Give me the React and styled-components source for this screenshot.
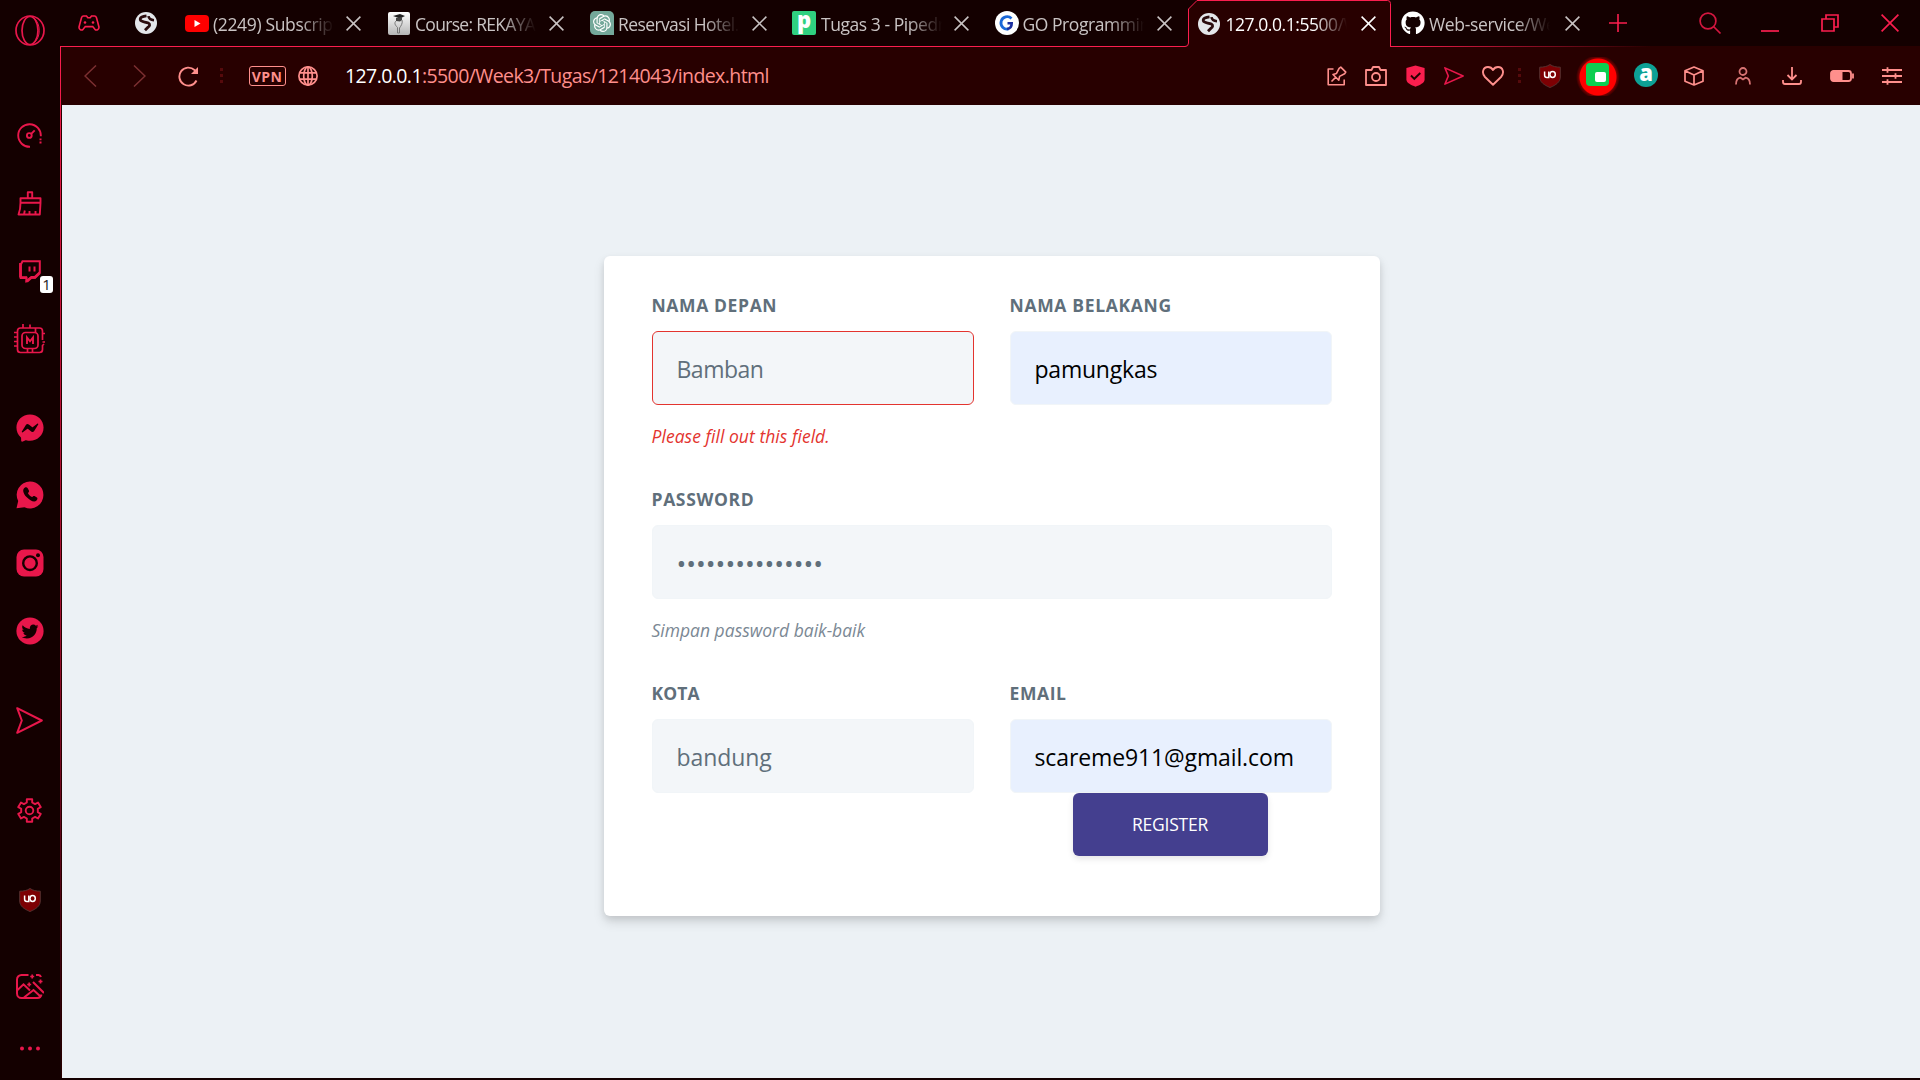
import React from "react";
import styled, { createGlobalStyle, css } from "styled-components";
import { FaGithub, FaTwitter, FaFacebookMessenger } from "react-icons/fa";
import { SiOpenai } from "react-icons/si";

const ACCENT = "#fa1e4e";
const SIDE = "#e8174b";
const SALMON = "#ff8f8c";

const GlobalStyle = createGlobalStyle`
  * { box-sizing: border-box; }
  body { margin: 0; background: #000; overflow: hidden; }
  body, input, button { font-family: "Open Sans", "Noto Sans", sans-serif; }
  svg { flex: none; }
`;

const Window = styled.div`
  display: flex;
  width: 1920px;
  height: 1080px;
  background: #140000;
`;

const Sidebar = styled.nav`
  display: flex;
  flex-direction: column;
  width: 60px;
  height: 1078px;
  padding-right: 1px;
  color: ${SIDE};
`;

const SideGroup = styled.div`
  display: flex;
  flex-direction: column;
  margin-top: ${(p) => p.$top}px;
`;

const SideItem = styled.div`
  position: relative;
  display: flex;
  align-items: center;
  justify-content: center;
  height: ${(p) => p.$h || 67.7}px;
  svg { display: block; }
`;

const Badge = styled.span`
  position: absolute;
  left: 40px;
  top: 39px;
  width: 13px;
  height: 17px;
  border-radius: 3px;
  background: #fff;
  color: #222;
  font-size: 15px;
  line-height: 16px;
  text-align: center;
`;

const Main = styled.div`
  display: flex;
  flex-direction: column;
  flex: 1;
  min-width: 0;
`;

const TabBar = styled.header`
  display: flex;
  height: 46px;
  align-items: stretch;
`;

const PinnedTab = styled.div`
  display: flex;
  align-items: center;
  justify-content: center;
  width: ${(p) => p.$w}px;
  padding-right: ${(p) => p.$shift || 0}px;
  color: ${ACCENT};
`;

const Tab = styled.div`
  position: relative;
  display: flex;
  flex: none;
  align-items: center;
  width: ${(p) => p.$w || 202.5}px;
  padding-left: ${(p) => p.$pad || 9}px;
  padding-right: ${(p) => p.$end || 17.5}px;
  color: ${(p) => (p.$active ? "#fff" : "#c9c3c3")};
  ${(p) => p.$active && css`height: 47px; z-index: 1;`}
`;

const TabOutline = styled.svg`
  position: absolute;
  left: -4px;
  top: 0;
`;

const TabIcon = styled.span`
  position: relative;
  display: flex;
  align-items: center;
  justify-content: center;
  flex: none;
  width: 24px;
  height: 24px;
`;

const TabTitle = styled.span`
  position: relative;
  flex: none;
  margin: 1px auto 0 ${(p) => p.$gap || 4}px;
  width: 121px;
  overflow: hidden;
  white-space: nowrap;
  font-size: 17.5px;
  line-height: 26px;
  letter-spacing: ${(p) => p.$ls || -0.45}px;
  -webkit-mask-image: linear-gradient(to right, #000 calc(100% - 34px), transparent);
  mask-image: linear-gradient(to right, #000 calc(100% - 34px), transparent);
`;

const CloseSlot = styled.span`
  position: relative;
  display: flex;
`;

const WindowTools = styled.div`
  display: flex;
  flex: 1;
  align-items: center;
  color: ${ACCENT};
`;

const ToolSlot = styled.div`
  display: flex;
  flex: none;
  align-items: center;
  justify-content: center;
  width: ${(p) => p.$w}px;
  height: 100%;
  margin-left: ${(p) => p.$gap || 0}px;
`;

const BelowTabs = styled.div`
  display: flex;
  flex: 1;
`;

const EdgeLine = styled.div`
  width: 1px;
  height: 1032px;
  background: linear-gradient(to bottom, ${ACCENT} 0, #d01540 20%, #a01030 55%, #2a0008 95%, #140000 100%);
`;

const Content = styled.div`
  display: flex;
  flex-direction: column;
  flex: 1;
  height: 1032px;
  background: #280000;
`;

const TopLine = styled.div`
  height: 1px;
  background: linear-gradient(to right, ${ACCENT} 0 1330px, #280000 1590px);
`;

const Toolbar = styled.div`
  display: flex;
  align-items: center;
  height: 58px;
  color: ${SALMON};
`;

const VpnTag = styled.span`
  display: flex;
  align-items: center;
  justify-content: center;
  width: 37px;
  height: 20px;
  border: 1.5px solid ${SALMON};
  border-radius: 3px;
  font: 700 14px/17px "Open Sans", sans-serif;
  letter-spacing: 0.4px;
`;

const Url = styled.div`
  flex: 1;
  padding-bottom: 1px;
  font-size: 19.5px;
  line-height: 28px;
  letter-spacing: -0.59px;
  white-space: nowrap;
  b { font-weight: 400; color: #fff; }
`;

const GlowDisc = styled.span`
  display: flex;
  align-items: center;
  justify-content: center;
  width: 48px;
  height: 39px;
  overflow: hidden;
  background: radial-gradient(circle at 24px 20px, #ff0000 0 18px, rgba(255, 0, 0, 0.35) 19px, rgba(255, 0, 0, 0) 22px);
  padding: 0 1px 3px 0;
`;

const GreenTile = styled.span`
  display: flex;
  align-items: flex-end;
  justify-content: flex-end;
  width: 23px;
  height: 23px;
  padding: 0 3px 4px 0;
  border-radius: 4px;
  background: #0dce50;
  &::after { content: ""; width: 11px; height: 10px; border-radius: 2px; background: #fff; }
`;

const TealDisc = styled.span`
  width: 24px;
  height: 24px;
  margin-bottom: 3px;
  border-radius: 50%;
  background: #0da195;
  color: #fff;
  font-size: 22px;
  font-weight: 800;
  line-height: 19px;
  text-align: center;
`;

const Page = styled.main`
  display: flex;
  flex: 1;
  justify-content: center;
  align-items: flex-start;
  margin-left: 1px;
  padding-top: 151px;
  background: #ecf1f5;
`;

const Card = styled.form`
  display: flex;
  flex-direction: column;
  width: 776px;
  height: 660px;
  padding: 36px 48px 0;
  border-radius: 6px;
  background: #fff;
  box-shadow: 0 6px 12px rgba(0, 0, 0, 0.12), 0 3px 6px rgba(0, 0, 0, 0.08);
  margin-left: 2px;
`;

const FormRow = styled.div`
  display: flex;
  gap: 36px;
  height: 194px;
`;

const Field = styled.div`
  display: flex;
  flex: 1;
  flex-direction: column;
  min-width: 0;
`;

const Label = styled.label`
  height: 39px;
  margin-left: -0.5px;
  color: #606f7b;
  font-size: 17.5px;
  font-weight: 700;
  line-height: 27px;
  letter-spacing: ${(p) => p.$ls || 0.3}px;
  text-transform: uppercase;
  white-space: nowrap;
`;

const Input = styled.input`
  width: 100%;
  height: 74px;
  padding: 2px 23.5px 0;
  border: 1px solid ${(p) => (p.$error ? "#e3342f" : "#f1f5f8")};
  border-radius: 6px;
  outline: none;
  background: ${(p) => (p.$filled ? "#e8f0fe" : "#f3f6f9")};
  color: #000;
  font-size: ${(p) => p.$size || 23}px;
  letter-spacing: ${(p) => p.$ls || 0}px;
  &::placeholder { color: #606f7b; opacity: 1; }
`;

const Hint = styled.p`
  margin: 18px 0 0 -0.5px;
  color: ${(p) => (p.$error ? "#e3342f" : "#7b8894")};
  font-size: 17.5px;
  font-style: italic;
  line-height: 27px;
  letter-spacing: ${(p) => p.$ls || 0}px;
  white-space: nowrap;
`;

const RegisterButton = styled.button`
  align-self: center;
  width: 195px;
  height: 63px;
  margin-right: 2px;
  padding-bottom: 3px;
  flex: none;
  border: 0;
  border-radius: 6px;
  background: #443f8f;
  color: #fff;
  font-size: 17.5px;
  letter-spacing: -0.25px;
  box-shadow: 0 3px 6px rgba(0, 0, 0, 0.1);
`;

const Svg = ({ w = 24, h = w, box, sw = 1.6, children, ...rest }) => (
  <svg width={w} height={h} viewBox={box || `0 0 ${w} ${h}`} fill="none" stroke="currentColor" strokeWidth={sw} {...rest}>
    {children}
  </svg>
);

const Cross = ({ size = 15, sw = 1.5 }) => (
  <Svg w={size} sw={sw}><path d={`M.6.6 ${size - 0.6} ${size - 0.6}M${size - 0.6}.6.6 ${size - 0.6}`} /></Svg>
);

const GlobeFavicon = () => (
  <Svg w={22} stroke="#2b0c0e">
    <circle cx="11" cy="11" r="11" fill="#e4e6ea" stroke="none" />
    <path d="M11.500 3.800C8 4.200 4.800 5.200 5.300 7.800c.5 2.400 5.200 1.900 8 3.200 2 1 1.600 3.200-.3 4.200l-3 3" strokeWidth="2.800" />
    <path d="M13.500 4.200c.3 2.400 2 3.800 5.500 4" strokeWidth="2.600" />
  </Svg>
);

const Gamepad = () => (
  <Svg w={22} h={16} sw={1.6}>
    <path d="M5.500 1h3l1.300 1.700h2.400L13.500 1h3c1 0 1.700.8 2 1.700l2.400 9c.5 2.500-2.200 4.300-4 2.600l-2.200-2.700H7.300l-2.200 2.700c-1.800 1.700-4.500-.1-4-2.600l2.400-9C3.800 1.800 4.500 1 5.500 1Z" />
    <circle cx="7" cy="7.500" r="1.300" fill="currentColor" stroke="none" />
    <circle cx="15" cy="7.500" r="1.300" fill="currentColor" stroke="none" />
  </Svg>
);

const YoutubeIcon = () => (
  <Svg w={24} h={17} stroke="none">
    <rect width="24" height="17" rx="4" fill="#f00" />
    <path d="m9.500 5 6 3.500-6 3.500z" fill="#fff" />
  </Svg>
);

const CourseIcon = () => (
  <Svg w={22} h={23} stroke="none">
    <defs><linearGradient id="course" x2="0" y2="1"><stop stopColor="#fff" /><stop offset="1" stopColor="#b5b5b5" /></linearGradient></defs>
    <rect width="22" height="23" rx="2" fill="url(#course)" />
    <path d="m5 4 7-2 5 2-5 2.500z" fill="#222" />
    <path d="M8 6v3l4 .5 2-1.500V5z" fill="#444" />
    <path d="M8 9c-2 2-1 4 1.500 6.500V21h2v-5C13 14 15 11 14 8" fill="none" stroke="#777" strokeWidth="1" />
  </Svg>
);

const ChatIcon = () => (
  <Svg w={24} stroke="none">
    <path d="M5 0h14a5 5 0 0 1 5 5v19H5a5 5 0 0 1-5-5V5a5 5 0 0 1 5-5Z" fill="#74a89a" />
    <SiOpenai x="3" y="3" width="18" height="18" size={18} color="#fff" />
  </Svg>
);

const PipeTile = styled.span`
  width: 24px;
  height: 24px;
  border-radius: 2px;
  background: #2fd180;
  color: #fff;
  font-size: 22px;
  font-weight: 800;
  line-height: 17px;
  text-align: center;
`;

const GIcon = () => (
  <Svg w={24} stroke="none">
    <circle cx="12" cy="12" r="12" fill="#fff" />
    <path d="M16.500 7.500A6.200 6.200 0 1 0 13.500 18" fill="none" stroke="#1b68d8" strokeWidth="2.800" />
    <path d="M12.500 12.200h4.200c0 3.300-1.600 5.400-4.600 5.800" fill="none" stroke="#1b2fa0" strokeWidth="2.600" />
  </Svg>
);

const UShield = () => (
  <Svg w={22} h={24} stroke="none">
    <path d="M11 .5c3 2 6 2.700 10.300 2.700V13c0 5-4.300 8-10.300 10.500C5 21 .7 18 .7 13V3.200C5 3.200 8 2.500 11 .5Z" fill="#7d0003" stroke="#54302f" strokeWidth="1" />
    <path d="M5.600 7.500v3.800a2.200 2.200 0 0 0 2.200 2.200h2V7.500" fill="none" stroke="#fff" strokeWidth="1.500" />
    <ellipse cx="13.600" cy="10.500" rx="2.700" ry="2.900" fill="none" stroke="#fff" strokeWidth="1.500" />
  </Svg>
);

const SendIcon = ({ w, h, sw, color }) => (
  <Svg w={w} h={h} box="0 0 27 27" sw={sw} color={color} preserveAspectRatio="none" strokeLinejoin="round">
    <path d="M1.200 1.200 25.800 13.500 1.200 25.800 5.800 13.500z" />
  </Svg>
);

const OperaIcon = () => (
  <Svg w={30} h={31} sw={1.700}>
    <ellipse cx="15" cy="15.500" rx="14" ry="14.500" />
    <ellipse cx="15" cy="15.500" rx="8" ry="14" />
    <path d="M19 3c7 6 7 19 0 25" strokeWidth="1" />
  </Svg>
);

const GaugeIcon = () => (
  <Svg w={25} h={25} sw={1.900}>
    <path d="M13 23.800a11.300 11.300 0 1 1 10.800-10.600" />
    <circle cx="12.300" cy="12.500" r="2.400" />
    <path d="m14.200 10.800 3.500-3.500" />
    <path d="M22.500 16.300h2M22.500 19.500h2" strokeWidth="1.800" />
  </Svg>
);

const BroomIcon = () => (
  <Svg w={25} h={25} sw={1.900} strokeLinejoin="round">
    <path d="M10.800 7V1.200h4.400V7M3.500 11.800V7.300h20v4.500zM3.500 11.800c0 4-.5 8.200-2 11.700h21.300l.7-11.700M7 23.500l.8-4M12.500 23.500v-3.500M18.500 23.500v-3.500" />
  </Svg>
);

const TwitchIcon = () => (
  <Svg w={22} h={23} sw={2}>
    <path d="M3.500 1.200h17.300v11.500l-5 5h-4L7.500 21v-3.300H1.600V5z" />
    <path d="M1.500 3v14.500M1 17.700h7M6.500 20.800h2l4-3.500h3.500l4.800-4.500" strokeWidth="2.800" />
    <path d="M10.500 6.500v5M15.500 6.500v5" />
  </Svg>
);

const ChipIcon = () => (
  <Svg w={32} h={30} sw={1.700}>
    <path d="M28.500 16v-9a3 3 0 0 0-3-3h-19a3 3 0 0 0-3 3v18.500a3 3 0 0 0 3 3h19a3 3 0 0 0 3-3v-4l1.500-1.500" />
    <rect x="8" y="8.500" width="16" height="16" rx="3.500" />
    <path d="M0 8.500h3.500M0 13h3.500M0 17.500h3.500M0 22h3.500M28.500 9.500H31M28.500 18H31M9 4V0M16 4V.5M21.500 8.500V4M13.500 28.500v-4M18.500 28.500v-4" />
    <path d="M13 20v-6.500l3 3.800 3-3.800V20" strokeWidth="1.900" />
  </Svg>
);

const WhatsappIcon = () => (
  <Svg w={28} h={28} stroke="none">
    <path d="M14 .5A13.300 13.300 0 0 1 27.400 14 13.300 13.300 0 0 1 8.500 26.200L.5 27.300 2.200 20A13.300 13.300 0 0 1 14 .5Z" fill="currentColor" />
    <path d="M9 6.500c-3 1.500-2 6 1.500 9.500 3.800 4 8 5.600 10 3.500 1.300-1.400 1.200-2.500 0-3.200l-2-1.200c-1-.6-1.600.2-2.400 1-1.300-.5-3.700-2.800-4.200-4.200.9-.7 1.500-1.300 1-2.400l-1.200-2.200c-.6-1-1.500-1.300-2.700-.8Z" fill="#140000" />
  </Svg>
);

const InstagramIcon = () => (
  <Svg w={28} h={28} stroke="none">
    <rect x=".5" y=".5" width="27" height="27" rx="7.500" fill="currentColor" />
    <circle cx="14" cy="14.200" r="6.800" fill="none" stroke="#140000" strokeWidth="2.400" />
    <circle cx="22" cy="6.200" r="2" fill="#140000" />
  </Svg>
);

const TwitterIcon = () => (
  <Svg w={28} h={28} stroke="none">
    <circle cx="14" cy="14" r="13.600" fill="currentColor" />
    <FaTwitter x="5.500" y="6" size={17} color="#140000" />
  </Svg>
);

const GearIcon = () => (
  <Svg w={25} h={25} sw={1.900} strokeLinejoin="round">
    <path d="M9.800 1.200h5.400v3.300l2.900 1.600 2.900-1.600 2.700 4.600-2.900 1.700v3.400l2.900 1.700-2.700 4.600-2.900-1.600-2.900 1.600v3.300H9.800v-3.300l-2.900-1.600L4 20.500l-2.700-4.600 2.900-1.700v-3.400L1.300 9.100 4 4.500l2.900 1.600 2.900-1.600z" />
    <circle cx="12.500" cy="12.500" r="3.800" />
  </Svg>
);

const PictureIcon = () => (
  <Svg w={28} h={25} sw={2}>
    <path d="M12.500 1H5.500A4.500 4.500 0 0 0 1 5.500v14A4.500 4.500 0 0 0 5.500 24H21a4.500 4.500 0 0 0 4.500-3.500M1 16.500 7.500 10.300 14 16.500M8 23.500l9.500-7.500 7 6.500M17 8l11 11" />
    <path d="M20 1h2.500a3 3 0 0 1 2.500 2" />
    <path d="M16.200.500v4M14.200 2.500h4M13.200 8.500v4M11.200 10.500h4M24.500 5.500v4M22.500 7.500h4" strokeWidth="1.700" />
  </Svg>
);

const DotsH = () => (
  <Svg w={20} h={5} stroke="none">
    <circle cx="2" cy="2.500" r="2" fill="currentColor" />
    <circle cx="10" cy="2.500" r="2" fill="currentColor" />
    <circle cx="18" cy="2.500" r="2" fill="currentColor" />
  </Svg>
);

const DotsV = () => (
  <Svg w={3} h={16} stroke="none"><path d="M0 0h3v3H0zM0 6h3v3H0zM0 12h3v3H0z" fill="#560a0c" /></Svg>
);

const Chevron = ({ right }) => (
  <Svg w={13} h={22} sw={1.500} color="#7c2f31"><path d={right ? "M1 .5 12 11 1 21.500" : "M12 .5 1 11 12 21.500"} /></Svg>
);

const ReloadIcon = () => (
  <Svg w={21} h={21} sw={1.900}><path d="M18.500 14.500A9 9 0 1 1 16.500 4l2 2" /><path d="M20 1v7h-7z" fill="currentColor" stroke="none" /></Svg>
);

const GlobeIcon = () => (
  <Svg w={20} h={20} sw={1.700}><circle cx="10" cy="10" r="9.100" /><ellipse cx="10" cy="10" rx="4.300" ry="9.100" /><path d="M10 1v18M1.700 6.800h16.600M1.700 13.200h16.600" /></Svg>
);

const PinEditIcon = () => (
  <Svg w={20} h={20} sw={1.600} strokeLinejoin="round">
    <path d="M6.500 3H1.200v15.800h16V13.500M4.500 15.500l4.600-4.600M6 8.500l5.800 5.700.8-3.800 5-2.700 1.200-1.600-5-5-1.700 1.300-2.600 5z" />
  </Svg>
);

const CameraIcon = () => (
  <Svg w={22} h={20} sw={1.800} strokeLinejoin="round"><path d="M1 4h5.500L8 1h6l1.500 3H21v15H1z" /><circle cx="11" cy="11" r="4" /></Svg>
);

const ShieldCheck = () => (
  <Svg w={19} h={22} stroke="none"><path d="M9.500.4 18.600 3v11.500c0 3.500-5 5.600-9.100 7.200C5.400 20.100.4 18 .4 14.500V3z" fill={ACCENT} /><path d="m5 10.500 3.300 3.300 6-5.800" fill="none" stroke="#280000" strokeWidth="1.900" /></Svg>
);

const HeartIcon = () => (
  <Svg w={22} h={20} sw={1.900}><path d="M11 18.700 3 11C-.7 7 1 1 6 1c2.300 0 4 1.200 5 3 1-1.800 2.700-3 5-3 5 0 6.700 6 3 10z" strokeLinejoin="round" /></Svg>
);

const CubeIcon = () => (
  <Svg w={20} h={20} sw={1.700} strokeLinejoin="round"><path d="M10 1 19 4.800v10.400L10 19 1 15.200V4.800zM1 4.800l9 4.200 9-4.200M10 9v10" /></Svg>
);

const PersonIcon = () => (
  <Svg w={16} h={18} sw={1.800} color="#d87373"><circle cx="8" cy="4.500" r="3.500" /><path d="M1 17.500c0-4 2-6.500 4.500-6.800L8 12.500l2.500-1.800c2.500.3 4.500 2.800 4.500 6.800" /></Svg>
);

const DownloadIcon = () => (
  <Svg w={20} h={18} sw={1.800}><path d="M10 0v12M5.500 8l4.500 4.500L14.500 8M1 13v2a2 2 0 0 0 2 2h14a2 2 0 0 0 2-2v-2" /></Svg>
);

const BatteryIcon = () => (
  <Svg w={24} h={12} sw={1.800}><rect x="1" y="1" width="20" height="10" rx="2.500" /><path d="M1 1h11.500v10H1z" fill="currentColor" stroke="none" /><path d="M23 3.500v5" /></Svg>
);

const SlidersIcon = () => (
  <Svg w={20} h={18} sw={1.800}><path d="M0 3h20M0 9h20M0 15h20M5.500.3v5.400M13.500 6.300v5.400M5.500 12.300v5.400" /></Svg>
);

const SearchIcon = () => (
  <Svg w={23} h={23} sw={1.700} color="#d3163f"><circle cx="9" cy="9" r="7.900" /><path d="m14.500 14.500 7 7" /></Svg>
);

const tabs = [
  { title: "(2249) Subscriptions", icon: <YoutubeIcon />, ls: -0.35 },
  { title: "Course: REKAYASA", icon: <CourseIcon />, pad: 8.5, ls: -0.7 },
  { title: "Reservasi Hotel.", icon: <ChatIcon />, end: 17, ls: -0.6 },
  { title: "Tugas 3 - Pipedream", icon: <PipeTile>p</PipeTile>, pad: 8.5, gap: 5 },
  { title: "GO Programming", icon: <GIcon />, end: 17, gap: 3.5 },
  { title: "127.0.0.1:5500/Week3", icon: <GlobeFavicon />, active: true, pad: 8.5, gap: 4.5, w: 202, end: 15 },
  { title: "Web-service/Week3", icon: <FaGithub size={24} color="#fff" />, pad: 10.5, end: 13.5, ls: -0.35 },
];

export default function App() {
  return (
    <>
      <GlobalStyle />
      <Window>
        <Sidebar>
          <SideItem $h={60}><OperaIcon /></SideItem>
          <SideGroup $top={42}>
            <SideItem><GaugeIcon /></SideItem>
            <SideItem><BroomIcon /></SideItem>
            <SideItem><TwitchIcon /><Badge>1</Badge></SideItem>
            <SideItem><ChipIcon /></SideItem>
          </SideGroup>
          <SideGroup $top={21}>
            <SideItem><FaFacebookMessenger size={28} /></SideItem>
            <SideItem><WhatsappIcon /></SideItem>
            <SideItem><InstagramIcon /></SideItem>
            <SideItem><TwitterIcon /></SideItem>
          </SideGroup>
          <SideGroup $top={22.5}><SideItem><SendIcon w={27} h={27} sw={2} /></SideItem></SideGroup>
          <SideGroup $top={22}><SideItem><GearIcon /></SideItem></SideGroup>
          <SideGroup $top={22}><SideItem><UShield /></SideItem></SideGroup>
          <SideGroup $top={18.5}><SideItem><PictureIcon /></SideItem></SideGroup>
          <SideItem $h={57}><DotsH /></SideItem>
        </Sidebar>
        <Main>
          <TabBar>
            <PinnedTab $w={58}><Gamepad /></PinnedTab>
            <PinnedTab $w={58} $shift={2}><GlobeFavicon /></PinnedTab>
            {tabs.map((t) => (
              <Tab key={t.title} $active={t.active} $w={t.w} $pad={t.pad} $end={t.end}>
                {t.active && (
                  <TabOutline width="206" height="47" viewBox="0 0 206 47">
                    <path d="M0 47V46.500C2 46.500 3.500 45 3.500 43V9L12 .5h191.500q2 0 2 2V43q0 3.500 0 4Z" fill="#280000" />
                    <path d="M0 46.500Q3.500 46.500 3.500 43V9L12 .5h190.500q3 0 3 3V47" fill="none" stroke={ACCENT} />
                  </TabOutline>
                )}
                <TabIcon>{t.icon}</TabIcon>
                <TabTitle $gap={t.gap} $ls={t.ls}>{t.title}</TabTitle>
                <CloseSlot><Cross /></CloseSlot>
              </Tab>
            ))}
            <WindowTools>
              <ToolSlot $w={50}><Svg w={18} h={18} sw={1.600}><path d="M9 0v18M0 9h18" /></Svg></ToolSlot>
              <ToolSlot $w={98} $gap={18}><SearchIcon /></ToolSlot>
              <ToolSlot $w={22}><Svg w={18} h={18} sw={1.700}><path d="M0 17h18" /></Svg></ToolSlot>
              <ToolSlot $w={98}><Svg w={18} h={18} sw={1.700}><path d="M1 5h12v12H1zM5 5V1h12v12h-4" /></Svg></ToolSlot>
              <ToolSlot $w={22}><Cross size={18} sw={1.700} /></ToolSlot>
            </WindowTools>
          </TabBar>
          <BelowTabs>
            <EdgeLine />
            <Content>
              <TopLine />
              <Toolbar>
                <ToolSlot $w={58}><Chevron /></ToolSlot>
                <ToolSlot $w={41}><Chevron right /></ToolSlot>
                <ToolSlot $w={57}><ReloadIcon /></ToolSlot>
                <ToolSlot $w={8}><DotsV /></ToolSlot>
                <ToolSlot $w={84}><VpnTag>VPN</VpnTag></ToolSlot>
                <ToolSlot $w={20} $gap={-11}><GlobeIcon /></ToolSlot>
                <ToolSlot $w={27} />
                <Url><b>127.0.0.1</b>:5500/Week3/Tugas/1214043/index.html</Url>
                <ToolSlot $w={38.8}><PinEditIcon /></ToolSlot>
                <ToolSlot $w={38.8}><CameraIcon /></ToolSlot>
                <ToolSlot $w={38.8}><ShieldCheck /></ToolSlot>
                <ToolSlot $w={38.8}><SendIcon w={20} h={18} sw={2.200} color={SIDE} /></ToolSlot>
                <ToolSlot $w={38.8}><HeartIcon /></ToolSlot>
                <ToolSlot $w={14}><DotsV /></ToolSlot>
                <ToolSlot $w={48}><UShield /></ToolSlot>
                <ToolSlot $w={48}><GlowDisc><GreenTile /></GlowDisc></ToolSlot>
                <ToolSlot $w={48}><TealDisc>a</TealDisc></ToolSlot>
                <ToolSlot $w={48}><CubeIcon /></ToolSlot>
                <ToolSlot $w={49.6}><PersonIcon /></ToolSlot>
                <ToolSlot $w={49.6}><DownloadIcon /></ToolSlot>
                <ToolSlot $w={49.6}><BatteryIcon /></ToolSlot>
                <ToolSlot $w={49.6}><SlidersIcon /></ToolSlot>
                <ToolSlot $w={3.600} />
              </Toolbar>
              <Page>
                <Card>
                  <FormRow>
                    <Field>
                      <Label $ls={0.62}>Nama Depan</Label>
                      <Input $error $ls={-0.5} placeholder="Bamban" />
                      <Hint $error $ls={0.04}>Please fill out this field.</Hint>
                    </Field>
                    <Field>
                      <Label $ls={0.68}>Nama Belakang</Label>
                      <Input $filled $ls={-0.22} readOnly value="pamungkas" />
                    </Field>
                  </FormRow>
                  <FormRow>
                    <Field>
                      <Label $ls={0.65}>Password</Label>
                      <Input $size={26} placeholder="•••••••••••••••" />
                      <Hint>Simpan password baik-baik</Hint>
                    </Field>
                  </FormRow>
                  <FormRow>
                    <Field>
                      <Label $ls={0.1}>Kota</Label>
                      <Input $ls={-0.1} placeholder="bandung" />
                    </Field>
                    <Field>
                      <Label $ls={0.6}>Email</Label>
                      <Input $filled $ls={-0.12} readOnly value="scareme911@gmail.com" />
                      <RegisterButton type="button">REGISTER</RegisterButton>
                    </Field>
                  </FormRow>
                </Card>
              </Page>
            </Content>
          </BelowTabs>
        </Main>
      </Window>
    </>
  );
}
